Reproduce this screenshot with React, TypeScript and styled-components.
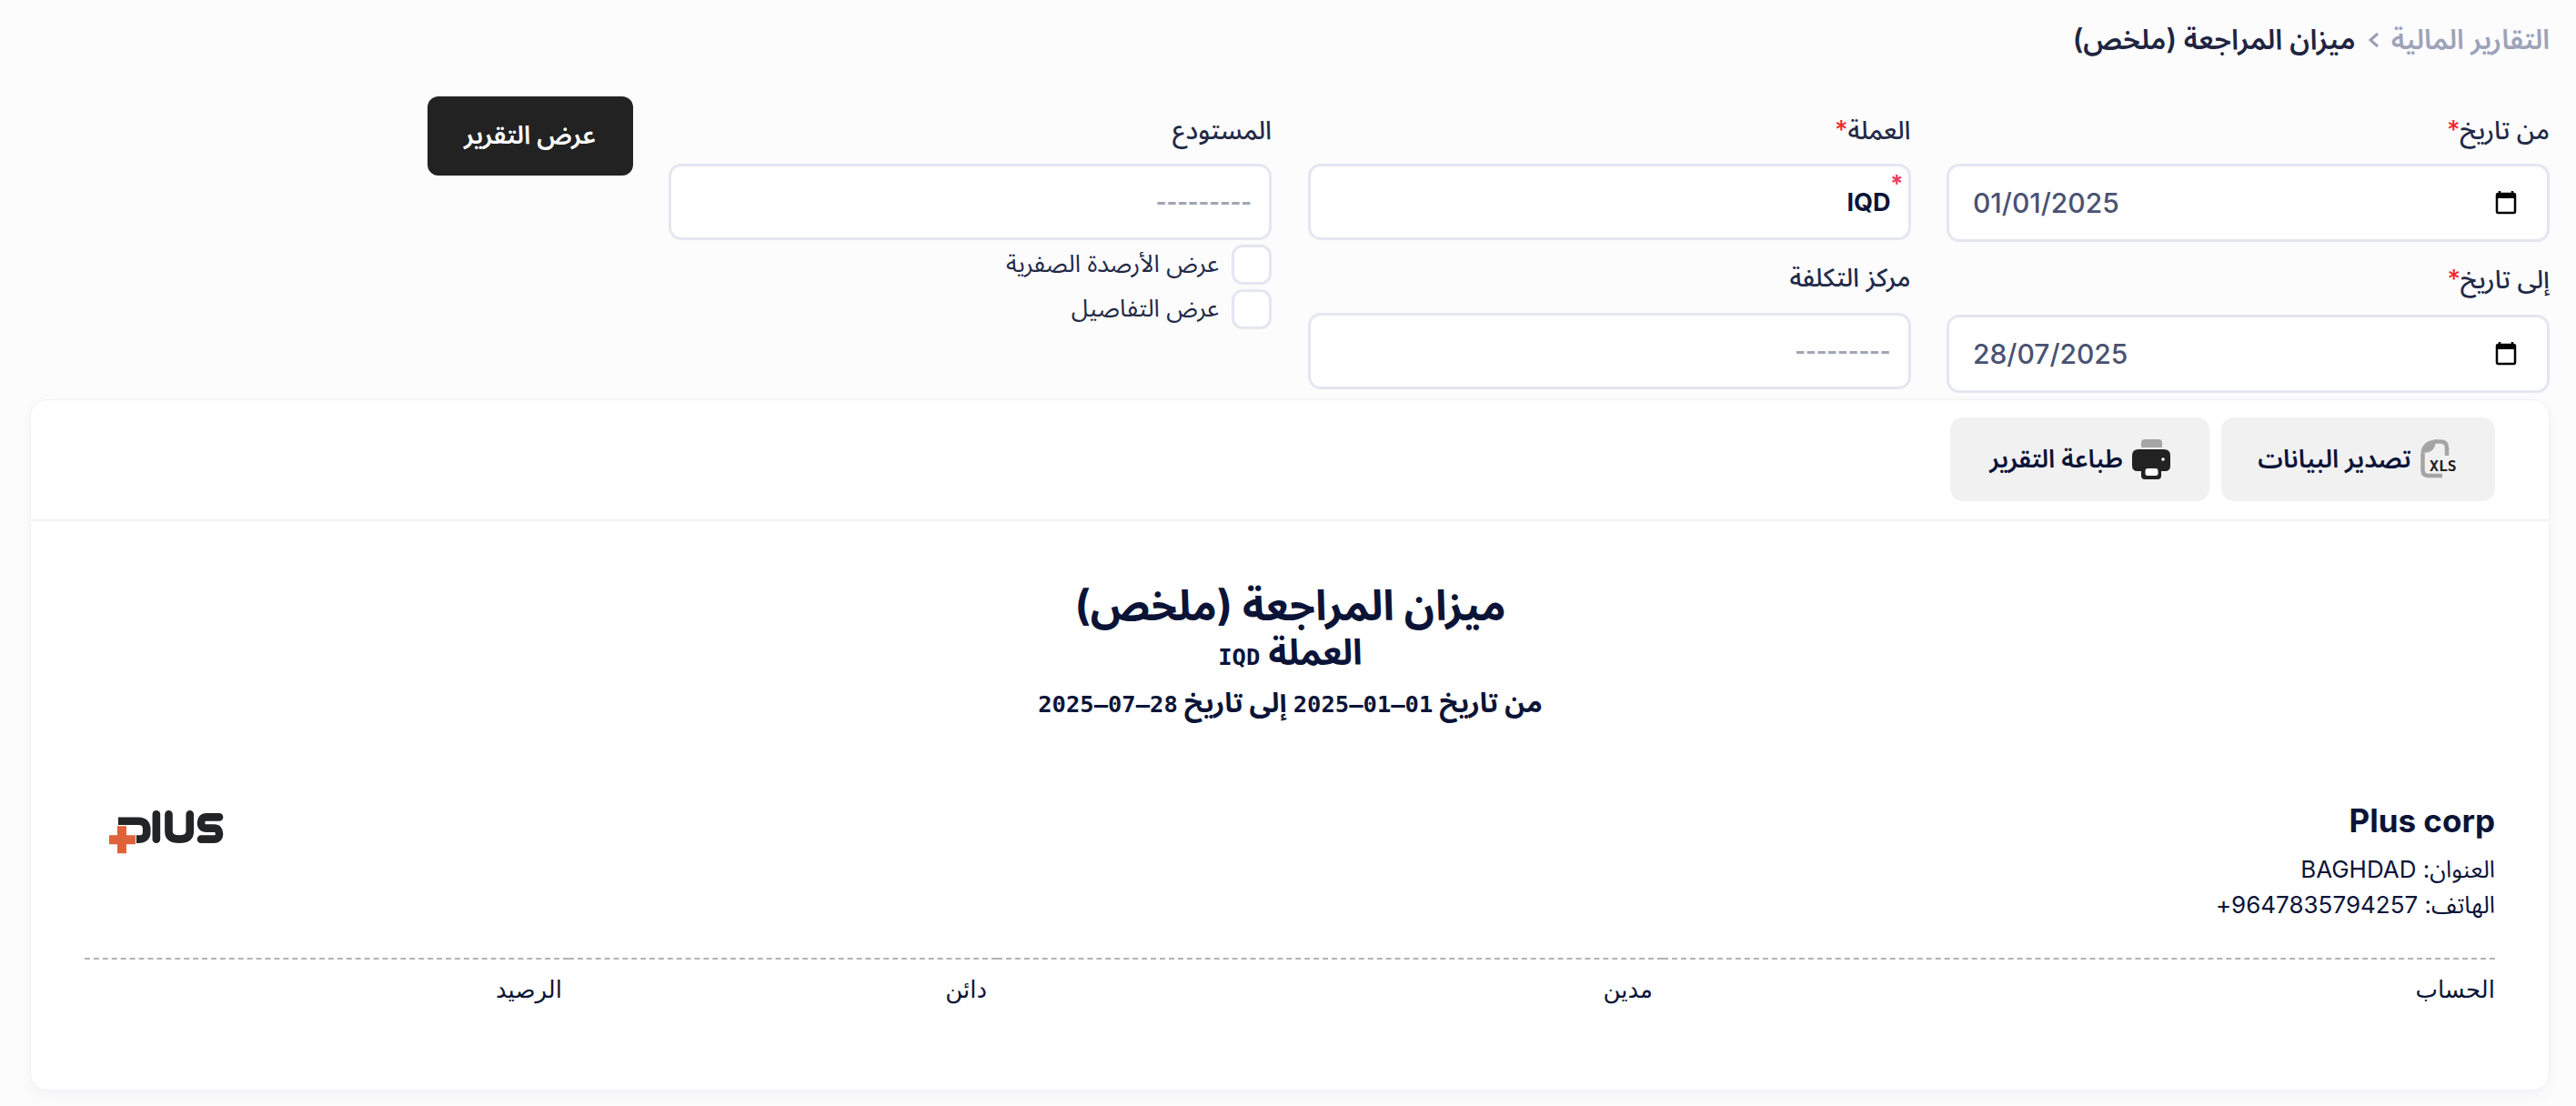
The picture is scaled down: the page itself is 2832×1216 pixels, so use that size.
import React from 'react'
import styled, { createGlobalStyle } from 'styled-components'

const GlobalStyle = createGlobalStyle`
  html, body {
    margin: 0;
    padding: 0;
    background: #fcfcfd;
    font-family: Inter, "Noto Sans Arabic", "Noto Sans", "DejaVu Sans", sans-serif;
  }
  * { box-sizing: border-box; }
`

const Page = styled.div`
  direction: rtl;
  width: 2832px;
  height: 1216px;
  padding: 24px 29px 0 33px;
  overflow: hidden;
`

const Breadcrumb = styled.nav`
  display: flex;
  align-items: center;
  gap: 13px;
  height: 40px;
  font-size: 31px;
  font-weight: 600;
  color: #1f2540;

  span:first-child { color: #9da3b8; font-size: 30px; }
`

const Chevron = styled.svg`
  width: 13px;
  height: 18px;
`

const FilterGrid = styled.form`
  display: grid;
  grid-template-columns: repeat(4, 663px);
  column-gap: 39.5px;
  margin-top: 42px;
`

const Column = styled.div<{ $top?: number }>`
  display: flex;
  flex-direction: column;
  padding-top: ${(p) => p.$top ?? 15}px;
`

const Label = styled.label<{ $next?: boolean }>`
  display: block;
  height: 45px;
  line-height: 45px;
  margin: ${(p) => (p.$next ? '19px 0 16px' : '0 0 14px')};
  font-size: 28px;
  font-weight: 500;
  color: #232a47;

  i { color: #f0262c; font-style: normal; }
`

const InputBox = styled.div<{ $h?: number }>`
  display: flex;
  align-items: center;
  height: ${(p) => p.$h ?? 84}px;
  padding: 0 19px;
  background: #fff;
  border: 3px solid #e4e6f0;
  border-radius: 14px;
  position: relative;
`

const DateBox = styled(InputBox)`
  direction: ltr;
  justify-content: space-between;
  padding: 0 33px 0 26px;
  font-size: 30px;
  font-weight: 500;
  color: #4a5272;
`

const Value = styled.span`
  font-size: 27px;
  font-weight: 700;
  color: #0b1437;
`

const Star = styled.span`
  position: absolute;
  top: 3px;
  right: 5px;
  color: #ee3a5d;
  font-size: 26px;
  font-weight: 700;
`

const Placeholder = styled.span`
  font-size: 25px;
  font-weight: 700;
  color: #a0a6b3;
`

const CheckRow = styled.div`
  display: flex;
  align-items: center;
  gap: 14px;
  height: 44px;
  margin-top: 5px;
  font-size: 26.5px;
  color: #232a47;

  &:first-of-type { margin-top: 3px; }
`

const CheckBox = styled.span`
  width: 44px;
  height: 44px;
  background: #fff;
  border: 3px solid #e4e6f0;
  border-radius: 12px;
`

const SubmitButton = styled.button`
  width: 226px;
  height: 87px;
  border: none;
  border-radius: 12px;
  background: #222223;
  color: #fff;
  font: inherit;
  font-size: 28px;
  font-weight: 600;
`

const Card = styled.section`
  height: 760px;
  margin: 7px 0 0 0;
  background: #fff;
  border: 1px solid #f1f1f3;
  border-radius: 18px;
  box-shadow: 0 6px 16px rgba(20, 20, 40, 0.04);
`

const Toolbar = styled.div`
  display: flex;
  gap: 13px;
  height: 133px;
  padding: 19px 59px 0;
  border-bottom: 2px solid #f1f1f3;
`

const ToolButton = styled.button<{ $w: number }>`
  display: flex;
  align-items: center;
  justify-content: center;
  gap: 10px;
  width: ${(p) => p.$w}px;
  height: 92px;
  border: none;
  border-radius: 14px;
  background: #f1f1f2;
  color: #0b1437;
  font: inherit;
  font-size: 27.5px;
  font-weight: 600;
`

const Report = styled.div`
  padding: 0 59px 0 60px;
`

const TitleBlock = styled.header`
  padding-top: 62px;
  text-align: center;
  color: #0b1437;
  font-weight: 700;
`

const Title = styled.h1`
  margin: 0;
  font-size: 46px;
  line-height: 60px;
`

const Subtitle = styled.h2`
  margin: 0;
  font-size: 39px;
  line-height: 44px;
  font-weight: 700;
`

const DateRange = styled.p`
  margin: 6px 0 0;
  font-size: 30px;
  line-height: 44px;
`

const Mono = styled.span`
  direction: ltr;
  unicode-bidi: isolate;
  font-family: "DejaVu Sans Mono", monospace;
  font-size: 25.5px;
`

const CompanyRow = styled.div`
  display: flex;
  justify-content: space-between;
  margin-top: 84px;
  height: 173px;
`

const CompanyInfo = styled.div`
  color: #0b1437;
  font-size: 26px;

  h3 { margin: 0 0 12px; font-size: 35px; font-weight: 700; line-height: 44px; }
  p { margin: 0; line-height: 39px; }
`

const LogoSlot = styled.div`
  margin-top: 10px;
  margin-inline: 0 25px;
`

const TableHead = styled.div`
  display: grid;
  grid-template-columns: 915px 732px 471px 532px;
`

const HeadCell = styled.div<{ $pad: number }>`
  height: 66px;
  padding: 14px ${(p) => p.$pad}px 0 0;
  border-top: 2px dashed #b3b3b3;
  font-family: "DejaVu Sans", sans-serif;
  font-size: 26px;
  line-height: 38px;
  color: #0b1437;
`

const LogoMark = () => (
  <svg width="128" height="50" viewBox="85 60 385 150">
    <g fill="none" stroke="#222426" strokeWidth="26">
      <path d="M118 98H185Q212 98 212 125V135Q212 158 185 158H178" />
      <path d="M244 76V158" strokeLinecap="round" />
      <path d="M285 76V132Q285 158 320 158Q355 158 355 132V76" strokeLinecap="round" />
      <path d="M452 85H410Q392 85 392 104Q392 122 410 122H435Q452 122 452 140Q452 158 435 158H392" strokeLinecap="round" />
    </g>
    <path d="M115 115H145V145H175V175H145V205H115V175H88V145H115Z" fill="#e0623a" />
  </svg>
)

const XlsIcon = () => (
  <svg width="42" height="44" viewBox="9 6 42 44">
    <g fill="none" stroke="#a5a5a5" strokeWidth="4.5">
      <path d="M24 8.5H31Q38 8.5 38 15.5V24" />
      <path d="M11.5 21V40Q11.5 46 18 46H33" />
    </g>
    <path d="M9.5 22Q9.5 14 15 10Q19 6.5 26 6.5Q26 14 22 18Q19 21 9.5 21Z" fill="#a5a5a5" />
    <text x="19" y="41" fontFamily="DejaVu Sans Mono" fontSize="16.5" fontWeight="700" fill="#222" direction="ltr">XLS</text>
  </svg>
)

const PrintIcon = () => (
  <svg width="42" height="44" viewBox="7 6 42 44">
    <path d="M17 15V10Q17 6 21 6H36Q40 6 40 10V15Z" fill="#a5a5a5" />
    <path d="M14 17H42Q49 17 49 24V35Q49 41 43 41H39V46Q39 50 35 50H21Q17 50 17 46V41H13Q7 41 7 35V24Q7 17 14 17Z" fill="#222" />
    <path d="M24 38H33Q35.5 38 35.5 41V44Q35.5 46 33 46H24Q21.5 46 21.5 44V41Q21.5 38 24 38Z" fill="#fff" />
    <circle cx="41" cy="28" r="1.8" fill="#fff" />
  </svg>
)

const CalendarIcon = () => (
  <svg width="24" height="26" viewBox="0 0 24 26">
    <path d="M5 0V3M19 0V3" stroke="#000" strokeWidth="2.5" />
    <rect x="2" y="3" width="20" height="21" rx="1.5" fill="none" stroke="#000" strokeWidth="2.5" />
    <rect x="2" y="3" width="20" height="5" fill="#000" />
  </svg>
)

const App = () => (
  <Page>
    <GlobalStyle />
    <Breadcrumb>
      <span>التقارير المالية</span>
      <Chevron viewBox="0 0 13 18"><path d="M11 2L3 9L11 16" fill="none" stroke="#9aa0b4" strokeWidth="3" /></Chevron>
      <span>ميزان المراجعة (ملخص)</span>
    </Breadcrumb>

    <FilterGrid>
      <Column>
        <Label>من تاريخ<i>*</i></Label>
        <DateBox $h={86}>01/01/2025<CalendarIcon /></DateBox>
        <Label $next>إلى تاريخ<i>*</i></Label>
        <DateBox $h={86}>28/07/2025<CalendarIcon /></DateBox>
      </Column>
      <Column>
        <Label>العملة<i>*</i></Label>
        <InputBox><Star>*</Star><Value>IQD</Value></InputBox>
        <Label $next>مركز التكلفة</Label>
        <InputBox><Placeholder>---------</Placeholder></InputBox>
      </Column>
      <Column>
        <Label>المستودع</Label>
        <InputBox><Placeholder>---------</Placeholder></InputBox>
        <CheckRow><CheckBox />عرض الأرصدة الصفرية</CheckRow>
        <CheckRow><CheckBox />عرض التفاصيل</CheckRow>
      </Column>
      <Column $top={0}>
        <SubmitButton type="button">عرض التقرير</SubmitButton>
      </Column>
    </FilterGrid>

    <Card>
      <Toolbar>
        <ToolButton $w={301}><XlsIcon />تصدير البيانات</ToolButton>
        <ToolButton $w={285}><PrintIcon />طباعة التقرير</ToolButton>
      </Toolbar>
      <Report>
        <TitleBlock>
          <Title>ميزان المراجعة (ملخص)</Title>
          <Subtitle>العملة <Mono>IQD</Mono></Subtitle>
          <DateRange>من تاريخ <Mono>2025–01–01</Mono> إلى تاريخ <Mono>2025–07–28</Mono></DateRange>
        </TitleBlock>
        <CompanyRow>
          <CompanyInfo>
            <h3>Plus corp</h3>
            <p>العنوان: BAGHDAD</p>
            <p>الهاتف: 9647835794257+</p>
          </CompanyInfo>
          <LogoSlot><LogoMark /></LogoSlot>
        </CompanyRow>
        <TableHead>
          <HeadCell $pad={0}>الحساب</HeadCell>
          <HeadCell $pad={11}>مدين</HeadCell>
          <HeadCell $pad={11}>دائن</HeadCell>
          <HeadCell $pad={7}>الرصيد</HeadCell>
        </TableHead>
      </Report>
    </Card>
  </Page>
)

export default App
